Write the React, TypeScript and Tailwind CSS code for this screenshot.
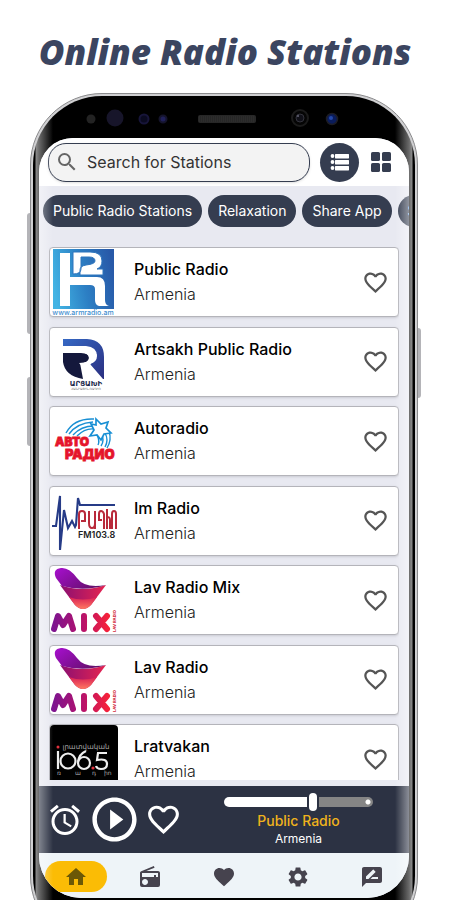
import React from "react";
import {
  MdAlarm,
  MdFavorite,
  MdFavoriteBorder,
  MdHome,
  MdPlayCircleOutline,
  MdRadio,
  MdRateReview,
  MdSearch,
  MdSettings,
} from "react-icons/md";

function PublicRadioLogo() {
  return (
    <svg viewBox="0 0 68 68" className="size-[68px]" aria-hidden="true">
      <defs>
        <linearGradient id="pr" x1="0" y1="0.6" x2="1" y2="0.4">
          <stop offset="0" stopColor="#43b4e4" />
          <stop offset="0.5" stopColor="#2c7fc4" />
          <stop offset="1" stopColor="#2859a8" />
        </linearGradient>
      </defs>
      <rect x="3" y="1" width="61" height="60" fill="url(#pr)" />
      <path d="M10 5h10v24h27q8 0 8 9v14q0 5 4 6H49q-4-1-4-6V41q0-4-5-4H20v21H10z" fill="#fff" />
      <path
        d="M23 4h17q12 0 12 9 0 6-5 8h6v6H30v-5q0-4 6-5 9-1 9-4 0-4-6-4h-8v12q0 5-8 5z"
        fill="#fff"
        stroke="#2c74bd"
        strokeWidth="1"
      />
      <text x="33" y="67" textAnchor="middle" fontSize="7" fontWeight="500" fill="#3f8fcf">
        www.armradio.am
      </text>
    </svg>
  );
}

function ArtsakhLogo() {
  return (
    <svg viewBox="0 0 68 68" className="size-[68px]" aria-hidden="true">
      <defs>
        <linearGradient id="ar" x1="0" y1="0" x2="1" y2="1">
          <stop offset="0" stopColor="#3568c4" />
          <stop offset="1" stopColor="#2b2f80" />
        </linearGradient>
      </defs>
      <path d="M13 11h24q17 1 17 18v22h-8L40 37l7-10q-3-6-11-7H13z" fill="url(#ar)" />
      <path d="M13 25h18q8 0 8 5t-9 5l3 16Q15 48 13 34z" fill="#14183c" />
      <path d="M13 18h23q11 1 11 10 0 6-7 8l13 15h-9L29 35q10 0 10-5t-8-5H13z" fill="#fff" />
      <text x="36" y="58" textAnchor="middle" fontSize="7" fontWeight="700" className="font-['DejaVu_Sans',sans-serif]" fill="#222a4c">
        ԱՐՑԱԽԻ
      </text>
      <text x="36" y="62" textAnchor="middle" fontSize="3" className="font-['DejaVu_Sans',sans-serif]" fill="#555">
        ՀԱՆՐԱՅԻՆ ՌԱԴԻՈ
      </text>
    </svg>
  );
}

function AutoradioLogo() {
  return (
    <svg viewBox="0 0 68 68" className="size-[68px]" aria-hidden="true">
      <g fill="none" stroke="#188fd4" strokeWidth="1.4">
        <path d="M16 26Q24 11 44 12M19 27q8-11 24-12M23 28q8-9 21-9M27 29q8-8 17-7" />
        <path d="M59 24q3 9-2 17M55 26q4 7 0 14M51 27q4 6 0 12M47 28q3 6 1 10" />
        <path d="M46 12l5 5 7-2-2 6 5 5-7 1-3 6-4-5-7 1 4-6-3-6 5 1z" fill="#fff" strokeWidth="1.7" />
      </g>
      <g fontWeight="900" fill="#e5142b" stroke="#e5142b" strokeWidth="0.8">
        <text x="5" y="39" fontSize="12">АВТО</text>
        <text x="15" y="52" fontSize="13">РАДИО</text>
      </g>
    </svg>
  );
}

function ImRadioLogo() {
  return (
    <svg viewBox="0 0 68 68" className="size-[68px]" aria-hidden="true">
      <path d="M2 39h4L10 9l0 54 4-40 4 18 4-7 3 6 1-2 2-27 2 7h35" fill="none" stroke="#263b87" strokeWidth="2.1" />
      <path
        d="M29 42V27q0-3 3-3t3 3v7h-4M39 24v12q0 5 3 5t3-5V24v18M49 34V27q0-3 2-3t3 3v15M49 33h3M57 22v20M57 31q3-2 3 2v9M62 42V27q0-3 2-3t2 3v15"
        fill="none"
        stroke="#b92a3b"
        strokeWidth="2"
      />
      <text x="28" y="51" fontSize="9" fontWeight="600" fill="#222">
        FM103.8
      </text>
    </svg>
  );
}

function MixLogo() {
  return (
    <svg viewBox="0 0 68 68" className="size-[68px]" aria-hidden="true">
      <defs>
        <linearGradient id="mxa" x1="0" y1="0" x2="1" y2="0.6">
          <stop offset="0" stopColor="#a80fd0" />
          <stop offset="1" stopColor="#64106b" />
        </linearGradient>
        <linearGradient id="mxb" x1="0" y1="0" x2="1" y2="0">
          <stop offset="0" stopColor="#8a0f72" />
          <stop offset="1" stopColor="#e62450" />
        </linearGradient>
        <linearGradient id="mxc" x1="0" y1="0" x2="0" y2="1">
          <stop offset="0" stopColor="#d91f55" />
          <stop offset="1" stopColor="#ff7a62" />
        </linearGradient>
        <linearGradient id="mxt" gradientUnits="userSpaceOnUse" x1="2" y1="0" x2="62" y2="0">
          <stop offset="0" stopColor="#7b1591" />
          <stop offset="0.5" stopColor="#b5126c" />
          <stop offset="1" stopColor="#ff2433" />
        </linearGradient>
      </defs>
      <path d="M10 19Q32 27 56 19L41 39q-8 8-16 0z" fill="url(#mxb)" />
      <path d="M19 31q14 5 28 0l-6 8q-8 8-16 0z" fill="url(#mxc)" />
      <path d="M6 12Q2 3 11 2q8-1 16 10t29 7Q34 26 12 20z" fill="url(#mxa)" />
      <path
        d="M4 63L8 50l5 9 6-9 4 13M34 50q.1 6 0 13M46 50l11 13M57 50L46 63"
        fill="none"
        stroke="url(#mxt)"
        strokeWidth="6"
        strokeLinecap="round"
        strokeLinejoin="round"
      />
      <text x="-66" y="66" transform="rotate(-90)" fontSize="4" fontWeight="800" fill="#d32a3c">
        LAV RADIO
      </text>
    </svg>
  );
}

function LratvakanLogo() {
  return (
    <svg viewBox="0 0 68 68" className="size-[68px]" aria-hidden="true">
      <rect width="68" height="68" rx="4" fill="#000" />
      <g className="font-['DejaVu_Sans',sans-serif]" fill="#aaa" fontSize="6">
        <text x="36" y="24" textAnchor="middle" fontSize="7">լրատվական</text>
        <text x="7" y="50">ռ</text>
        <text x="25" y="50">ա</text>
        <text x="42" y="50">դ</text>
        <text x="54" y="50">իո</text>
      </g>
      <g fill="none" stroke="#eee" strokeWidth="2.2">
        <path d="M8 26v18" />
        <circle cx="18" cy="36" r="7.5" />
        <circle cx="34" cy="38" r="6" />
        <path d="M28 37q1-8 8-11M57 28h-9l-1 7q10-2 10 4 0 5-6 5-4 0-5-3" />
      </g>
      <circle cx="8" cy="22" r="1.5" fill="#e2323e" />
      <circle cx="43" cy="43" r="1.6" fill="#e2323e" />
    </svg>
  );
}

function ListIcon() {
  return (
    <svg viewBox="0 0 20 18" className="h-[18px] w-5" fill="currentColor" aria-hidden="true">
      <circle cx="2.5" cy="3" r="1.9" />
      <circle cx="2.5" cy="9" r="1.9" />
      <circle cx="2.5" cy="15" r="1.9" />
      <rect x="5" y="1" width="14" height="4.4" rx="0.6" />
      <rect x="5" y="7" width="14" height="4.4" rx="0.6" />
      <rect x="5" y="13" width="14" height="4.4" rx="0.6" />
    </svg>
  );
}

function GridIcon() {
  return (
    <svg viewBox="0 0 20 20" className="size-5" fill="currentColor" aria-hidden="true">
      <rect x="0" y="0" width="9" height="9" rx="1.6" />
      <rect x="11" y="0" width="9" height="9" rx="1.6" />
      <rect x="0" y="11" width="9" height="9" rx="1.6" />
      <rect x="11" y="11" width="9" height="9" rx="1.6" />
    </svg>
  );
}

/* Sensors, speaker grille and camera lenses in the phone's top bezel. */
function Sensors() {
  return (
    <div className="flex h-[42px] shrink-0 items-center justify-center pt-1">
      <svg viewBox="0 0 370 28" className="h-7 w-[370px]" aria-hidden="true">
        <circle cx="52" cy="14" r="4.5" fill="#232323" />
        <circle cx="76" cy="13" r="8.5" fill="#17152a" />
        <circle cx="105" cy="14" r="4.5" fill="#0a0a20" stroke="#17153a" strokeWidth="2" />
        <circle cx="124" cy="14" r="3.5" fill="#20205a" stroke="#15142c" strokeWidth="2" />
        <rect x="159" y="10" width="58" height="8" rx="2" fill="#272727" />
        <path d="M160 12h56M160 14h56M160 16h56" stroke="#3a3a3a" strokeWidth="0.7" strokeDasharray="1 1" />
        <circle cx="261" cy="13" r="8" fill="#050505" stroke="#1b1b1b" strokeWidth="2" />
        <circle cx="261" cy="13" r="4" fill="#101018" stroke="#33333c" strokeWidth="1" />
        <circle cx="259" cy="11" r="1" fill="#666678" />
        <circle cx="293" cy="14" r="5.5" fill="#0a1c5c" stroke="#1d1d24" strokeWidth="1.5" />
        <circle cx="292" cy="13" r="2" fill="#2448a8" />
      </svg>
    </div>
  );
}

const categories = ["Public Radio Stations", "Relaxation", "Share App", "Settings"];

const stations = [
  { name: "Public Radio", Logo: PublicRadioLogo },
  { name: "Artsakh Public Radio", Logo: ArtsakhLogo },
  { name: "Autoradio", Logo: AutoradioLogo },
  { name: "Im Radio", Logo: ImRadioLogo },
  { name: "Lav Radio Mix", Logo: MixLogo },
  { name: "Lav Radio", Logo: MixLogo },
  { name: "Lratvakan", Logo: LratvakanLogo },
];

const tabs = [
  { label: "Home", Icon: MdHome, active: true },
  { label: "Radio", Icon: MdRadio, active: false },
  { label: "Favorites", Icon: MdFavorite, active: false },
  { label: "Settings", Icon: MdSettings, active: false },
  { label: "Review", Icon: MdRateReview, active: false },
];

function Header() {
  return (
    <header className="flex h-12 shrink-0 items-center bg-white pr-[18px] pl-[9px]">
      <label className="flex h-[39px] min-w-0 flex-1 items-center gap-2 rounded-[18px] border border-[#353d50] bg-[#f3f3f3] pl-[6px] shadow-sm">
        <MdSearch className="size-6 shrink-0 text-[#666]" />
        <input
          type="search"
          aria-label="Search for Stations"
          placeholder="Search for Stations"
          className="w-full min-w-0 bg-transparent text-base outline-none placeholder:text-[#333]"
        />
      </label>
      <button aria-label="List view" className="ml-[10px] flex size-[39px] items-center justify-center rounded-full bg-[#353d50] text-white">
        <ListIcon />
      </button>
      <button aria-label="Grid view" className="ml-3 text-[#353d50]">
        <GridIcon />
      </button>
    </header>
  );
}

function Player() {
  return (
    <section className="flex h-[67px] shrink-0 items-center bg-[#2c3243] pl-2 text-white">
      <button aria-label="Sleep timer">
        <MdAlarm className="size-9" />
      </button>
      <button aria-label="Play" className="ml-[5px]">
        <MdPlayCircleOutline className="size-[53px]" />
      </button>
      <button aria-label="Add to favorites" className="ml-[4px]">
        <MdFavoriteBorder className="size-[37px]" />
      </button>
      <div className="mr-9 ml-auto flex w-[149px] flex-col items-center pt-1">
        <input
          type="range"
          aria-label="Volume"
          defaultValue={60}
          className="h-[10px] w-full appearance-none rounded-full bg-[radial-gradient(circle_at_144px_5px,#fff_2px,transparent_3px),linear-gradient(to_right,#fff_60%,#858585_60%)] [&::-webkit-slider-thumb]:h-[18px] [&::-webkit-slider-thumb]:w-2 [&::-webkit-slider-thumb]:appearance-none [&::-webkit-slider-thumb]:rounded-[4px] [&::-webkit-slider-thumb]:bg-white [&::-webkit-slider-thumb]:shadow-[0_0_0_2px_#2c3243]"
        />
        <p className="mt-1 text-sm leading-5 font-medium text-[#f0b31c]">Public Radio</p>
        <p className="text-xs leading-4">Armenia</p>
      </div>
    </section>
  );
}

export default function App() {
  return (
    <main className="flex h-screen flex-col overflow-hidden bg-white font-['Inter','Liberation_Sans',sans-serif] text-black">
      <h1 className="flex h-[93px] shrink-0 items-center justify-center pt-[10px] font-['Open_Sans','Noto_Sans',sans-serif] text-[35px] leading-10 font-extrabold whitespace-nowrap text-[#3b4560] italic">
        Online Radio Stations
      </h1>
      <div className="relative -mb-12 mr-8 ml-[30px] flex min-h-0 flex-1 flex-col rounded-[72px] border border-[#8a8a8c] bg-[#d0d0d2] p-[2px]">
        <span className="absolute top-[119px] -left-1 h-[121px] w-[3px] rounded-l-sm bg-[#b4b4b8]" />
        <span className="absolute top-[283px] -left-1 h-[69px] w-[3px] rounded-l-sm bg-[#b4b4b8]" />
        <span className="absolute top-[234px] -right-1 h-[70px] w-[3px] rounded-r-sm bg-[#b4b4b8]" />
        <div className="flex min-h-0 flex-1 flex-col rounded-[69px] bg-[linear-gradient(to_right,#000_2px,#8a8a8a_3px,#6a6a6a_6px,#000_20px,#000_calc(100%-20px),#6a6a6a_calc(100%-6px),#8a8a8a_calc(100%-3px),#000_calc(100%-2px))] px-[6px] pb-[47px]">
          <Sensors />
          <div className="relative flex min-h-0 flex-1 flex-col overflow-hidden rounded-t-[34px] rounded-b-[42px] bg-[#e8e9f1]">
            <Header />
            <nav className="flex shrink-0 gap-[6px] overflow-hidden pt-[9px] pl-1">
              {categories.map((name) => (
                <button key={name} className="h-8 shrink-0 rounded-full bg-[#353d50] px-[10px] text-sm text-white">
                  {name}
                </button>
              ))}
            </nav>
            <div className="mx-[10px] mt-5 mb-[6px] min-h-0 flex-1 overflow-hidden">
              <ul className="flex h-[547px] flex-col justify-between">
                {stations.map(({ name, Logo }) => (
                  <li key={name} className="flex h-[70px] shrink-0 items-center rounded-[4px] border border-[#b4b4ba] bg-white pr-[9px] shadow-sm">
                    <Logo />
                    <div className="ml-4 flex-1">
                      <h2 className="text-base leading-[25px] font-medium">{name}</h2>
                      <p className="text-base leading-[25px] font-light text-[#222]">Armenia</p>
                    </div>
                    <button aria-label={"Add " + name + " to favorites"} className="text-[#555]">
                      <MdFavoriteBorder className="size-[27px]" />
                    </button>
                  </li>
                ))}
              </ul>
            </div>
            <Player />
            <nav className="grid h-[45px] shrink-0 grid-cols-5 items-center bg-[#eef4f8] pt-[2px]">
              {tabs.map(({ label, Icon, active }) => (
                <button
                  key={label}
                  aria-label={label}
                  className={
                    active
                      ? "mx-auto flex h-[31px] w-[62px] items-center justify-center rounded-full bg-[#fbbc05] text-[#6b5806]"
                      : "mx-auto flex h-[31px] w-[62px] items-center justify-center text-[#46434e]"
                  }
                >
                  <Icon className="size-6" />
                </button>
              ))}
            </nav>
            <div className="pointer-events-none absolute inset-0 bg-[linear-gradient(to_right,rgba(255,255,255,0.4),transparent_14px,transparent_calc(100%-14px),rgba(255,255,255,0.45))]" />
          </div>
        </div>
      </div>
    </main>
  );
}
